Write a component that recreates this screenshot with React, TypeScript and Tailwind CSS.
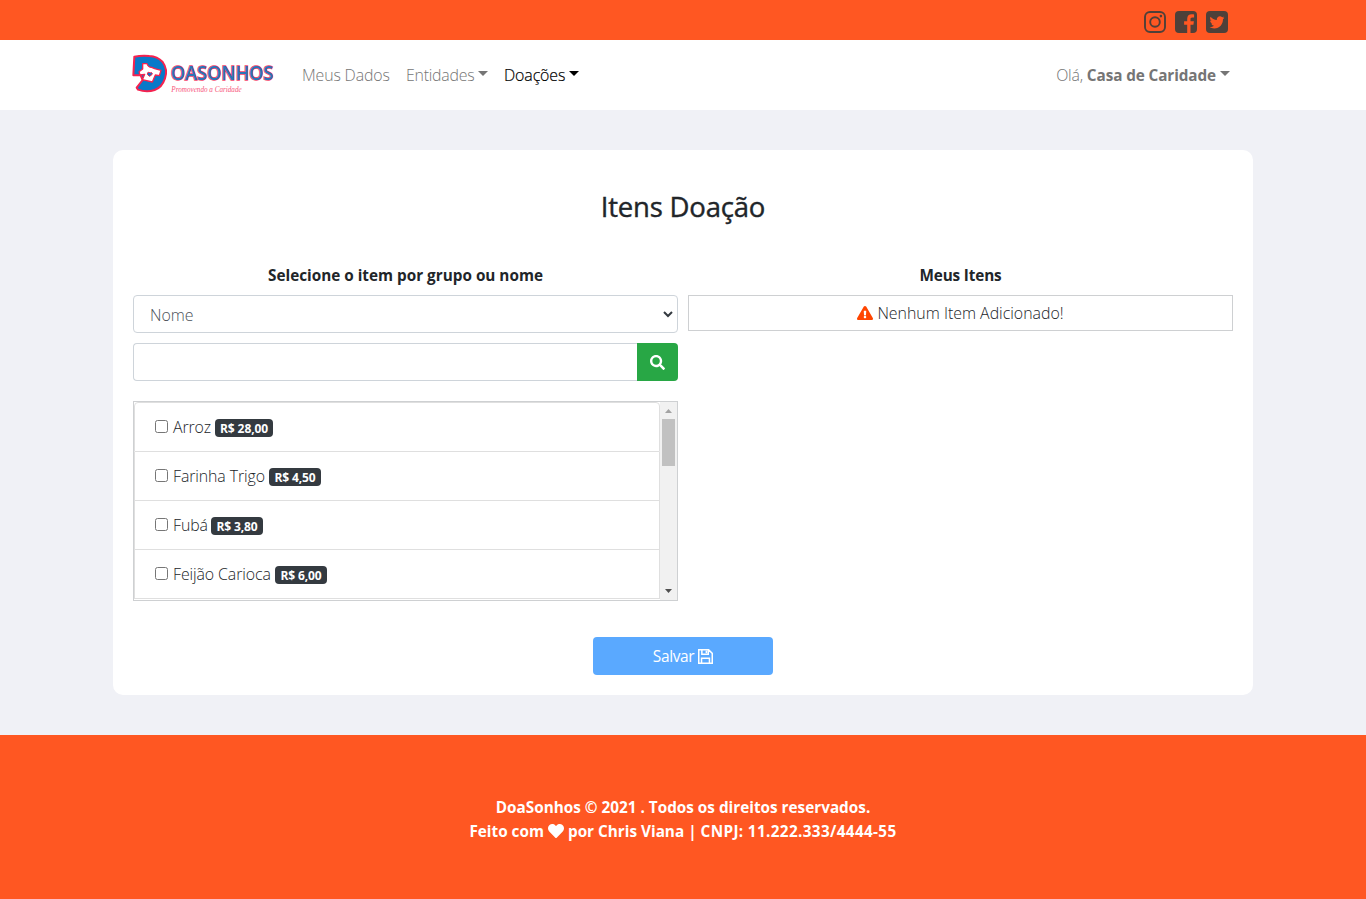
import type { ReactNode } from 'react';
import { FaTwitter, FaSearch, FaExclamationTriangle, FaHeart } from 'react-icons/fa';

const items = [
  { name: 'Arroz', price: 'R$ 28,00', nameWidth: 'w-[38px]', badgeWidth: 'w-[58px]' },
  { name: 'Farinha Trigo', price: 'R$ 4,50', nameWidth: 'w-[92px]', badgeWidth: 'w-[52px]' },
  { name: 'Fubá', price: 'R$ 3,80', nameWidth: 'w-[34px]', badgeWidth: 'w-[52px]' },
  { name: 'Feijão Carioca', price: 'R$ 6,00', nameWidth: 'w-[98px]', badgeWidth: 'w-[52px]' },
];

function Logo() {
  return (
    <svg width="146" height="44" viewBox="30 36 438 132" overflow="visible" className="block shrink-0" aria-label="DoaSonhos">
      <path
        d="M43 50 Q64 46 88 48 Q112 49 128 66 Q144 88 135 115 Q126 142 104 150 Q80 158 54 149 L50 143 L68 120 L62 106 L40 106 Z"
        fill="#0879c9" stroke="#f5224f" strokeWidth="6" strokeLinejoin="round"
      />
      <path
        d="M68 71 L81 71 Q84 82 95 82 L104 86 L123 91 L118 107 L106 105 L97 126 L67 119 L74 103 L60 105 L57 95 L68 87 Z"
        fill="#fff" stroke="#f5224f" strokeWidth="4" strokeLinejoin="round"
      />
      <path d="M88 109 Q79 103 83 98 Q87 95 90 99 Q95 96 97 100 Q97 106 88 109Z" fill="#0879c9" stroke="#f5224f" strokeWidth="3" />
      <text
        x="152" y="119" textLength="308" lengthAdjust="spacingAndGlyphs" fill="#2a74b8" stroke="#f5426a"
        strokeWidth="4" paintOrder="stroke" className="font-['Open_Sans',sans-serif] text-[57px] font-semibold"
      >
        OASONHOS
      </text>
      <text
        x="154" y="155" textLength="211" lengthAdjust="spacingAndGlyphs" fill="#f7557a"
        className="font-['Liberation_Serif',serif] text-[23px] italic"
      >
        Promovendo a Caridade
      </text>
    </svg>
  );
}

function InstagramIcon() {
  return (
    <svg width="22" height="22" viewBox="0 0 22 22" fill="none" stroke="currentColor" strokeWidth="1.9">
      <rect x="1" y="1" width="20" height="20" rx="5" />
      <circle cx="11" cy="11" r="4.8" />
      <circle cx="16.9" cy="5.1" r="1.3" fill="currentColor" stroke="none" />
    </svg>
  );
}

function FacebookIcon() {
  return (
    <svg width="22" height="22" viewBox="0 0 22 22">
      <rect width="22" height="22" rx="4" fill="currentColor" />
      <path d="M12.2 22v-8.3H9.1v-3.4h3.1V7.7c0-2.9 1.8-4.4 4.5-4.4 1.1 0 1.9.1 2.4.2v3h-1.8c-1.5 0-1.8.7-1.8 1.8v2h3.4l-.5 3.4h-2.9V22z" fill="#ff5722" />
    </svg>
  );
}

function TwitterIcon() {
  return (
    <svg width="22" height="22" viewBox="0 0 22 22">
      <rect width="22" height="22" rx="4" fill="currentColor" />
      <FaTwitter x="3.5" y="3.8" size={15} color="#ff5722" />
    </svg>
  );
}

function Caret() {
  return <span className="mb-[3px] ml-1 h-0 w-0 border-x-[5px] border-t-[5px] border-x-transparent border-t-current" />;
}

function SaveIcon() {
  return (
    <svg width="15" height="15" viewBox="0 0 14 14" fill="none" stroke="currentColor" strokeWidth="1.4">
      <path d="M.7.7h9.2l3.4 3.4v9.2H.7zM3.3 13V8.7h7.4V13M3.6.7v4.2h6V.7" />
      <path d="M7.1 1.5h1.5v2.4H7.1z" fill="currentColor" stroke="none" />
    </svg>
  );
}

function ColumnTitle({ children }: { children: ReactNode }) {
  return <div className="flex h-[25px] justify-center whitespace-nowrap text-center text-[15.3px] font-bold leading-6">{children}</div>;
}

export default function App() {
  return (
    <div className="flex h-[899px] flex-col overflow-hidden bg-[#f0f1f6] font-['Open_Sans',sans-serif] text-[15.9px] font-light leading-6 text-[#212529]">
      <div className="h-10 shrink-0 bg-[#ff5722]">
        <div className="mx-auto flex h-10 w-[1140px] justify-end gap-[9px] pr-[25px] pt-[11px] text-[#4f4039]">
          <InstagramIcon />
          <FacebookIcon />
          <TwitterIcon />
        </div>
      </div>
      <header className="h-[70px] shrink-0 bg-white">
        <div className="mx-auto flex h-[70px] w-[1140px] items-center pl-[17px] pr-[23px] text-[#757575]">
          <div className="-mt-[2px]"><Logo /></div>
          <nav className="ml-[26px] flex whitespace-nowrap">
            <a className="w-[104px] tracking-[-0.15px]">Meus Dados</a>
            <a className="flex w-[98px] items-center tracking-[-0.25px]">Entidades<Caret /></a>
            <a className="flex items-center tracking-[-0.1px] text-black [-webkit-text-stroke:0.2px_black]">Doações<Caret /></a>
          </nav>
          <div className="ml-auto flex items-center whitespace-nowrap tracking-[-0.2px]">
            Olá,&nbsp;<span className="text-[15.3px] font-bold tracking-[-0.1px]">Casa de Caridade</span><Caret />
          </div>
        </div>
      </header>

      <main className="mx-auto mt-10 h-[545px] w-[1140px] shrink-0 rounded-[10px] bg-white px-5">
        <h1 className="flex h-[113px] justify-center pt-10 text-[27.5px] font-normal leading-[34px] tracking-[-0.2px] [-webkit-text-stroke:0.4px_#212529]">Itens Doação</h1>
        <div className="grid h-[374px] grid-cols-2 gap-[10px]">
          <section>
            <ColumnTitle>Selecione o item por grupo ou nome</ColumnTitle>
            <div className="mt-[7px] flex h-[38px] items-center rounded border border-[#ced4da] px-4 text-[#495057]">
              <span className="pt-[2px]">Nome</span>
              <svg width="10" height="7" viewBox="0 0 10 7" className="-mr-[12px] ml-auto text-[#343a40]" fill="none" stroke="currentColor" strokeWidth="2">
                <path d="M1 1l4 4 4-4" />
              </svg>
            </div>
            <div className="mt-[10px] flex h-[38px]">
              <div className="flex-1 rounded-l border border-r-0 border-[#ced4da]" />
              <button className="flex w-[41px] items-center justify-center rounded-r bg-[#28a745] text-white"><FaSearch size={15} /></button>
            </div>
            <div className="mt-5 flex h-[200px] overflow-hidden border border-[#ced0d2]">
              <ul className="min-w-0 flex-1">
                {items.map((item, i) => (
                  <li key={item.name} className={`flex items-center border-x border-b border-[#dfdfdf] pl-5 ${i === 0 ? 'h-[50px] rounded-t border-t' : 'h-[49px]'}`}>
                    <span className="mb-[2px] h-[13px] w-[13px] shrink-0 rounded-[2.5px] border border-[#767676] bg-white" />
                    <span className={`ml-[5px] whitespace-nowrap tracking-[-0.1px] ${item.nameWidth}`}>{item.name}</span>
                    <span className={`ml-1 mt-px flex h-[18px] items-center justify-center whitespace-nowrap rounded bg-[#343a40] pt-[2px] text-[12px] font-bold leading-none tracking-[-0.1px] text-white ${item.badgeWidth}`}>{item.price}</span>
                  </li>
                ))}
              </ul>
              <div className="flex w-[17px] shrink-0 flex-col items-center bg-[#f1f1f1]">
                <svg width="7" height="4" viewBox="0 0 7 4" className="mt-[7px]"><path d="M0 4h7L3.5 0z" fill="#a3a3a3" /></svg>
                <div className="mt-[6px] h-[47px] w-[13px] bg-[#c1c1c1]" />
                <svg width="7" height="4" viewBox="0 0 7 4" className="mb-[7px] mt-auto"><path d="M0 0h7L3.5 4z" fill="#505050" /></svg>
              </div>
            </div>
          </section>
          <section>
            <ColumnTitle><span className="tracking-[-0.15px]">Meus Itens</span></ColumnTitle>
            <div className="mt-[7px] flex h-[36px] items-center justify-center gap-1 whitespace-nowrap border border-[#ced0d2]">
              <FaExclamationTriangle size={16} className="text-[#ff4500]" />
              <span>Nenhum Item Adicionado!</span>
            </div>
          </section>
        </div>
        <button className="mx-auto flex h-[38px] w-[180px] items-center justify-center gap-1 rounded bg-[#5aa9ff] text-[15.5px] font-normal tracking-[-0.4px] text-white">
          Salvar <SaveIcon />
        </button>
      </main>
      <footer className="mt-10 flex-1 bg-[#ff5722] pt-[60px] text-center text-[15.3px] font-bold text-white">
        <div>DoaSonhos © 2021 . Todos os direitos reservados.</div>
        <div className="flex items-center justify-center gap-1 whitespace-nowrap">
          <span>Feito com</span>
          <FaHeart size={16} />
          <span>por Chris Viana |</span>
          <span className="tracking-[0.35px]">CNPJ: 11.222.333/4444-55</span>
        </div>
      </footer>
    </div>
  );
}
